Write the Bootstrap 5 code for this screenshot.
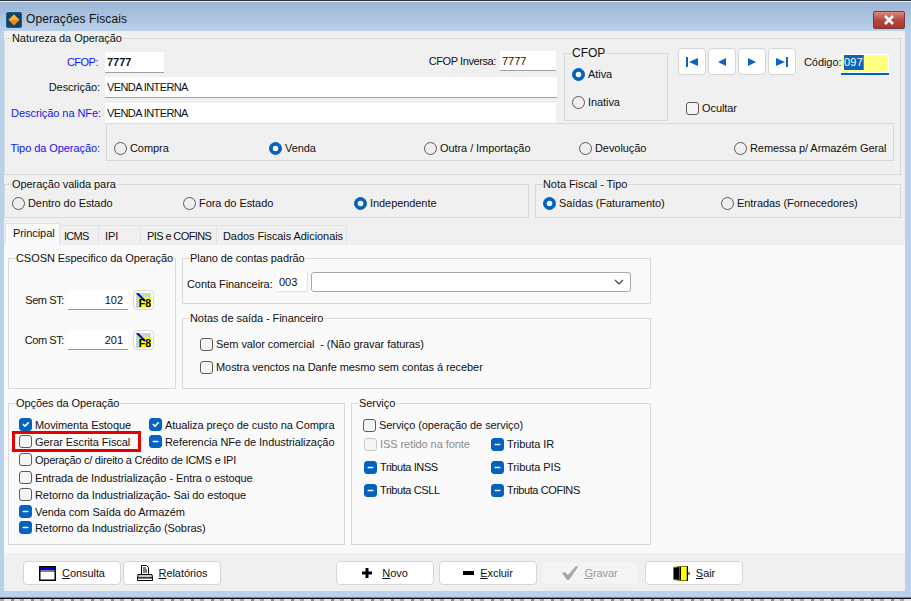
<!DOCTYPE html>
<html lang="pt-BR"><head><meta charset="utf-8"><title>Operações Fiscais</title>
<link rel="stylesheet" href="https://cdn.jsdelivr.net/npm/bootstrap@5.3.0/dist/css/bootstrap.min.css">
<style>
html,body{height:601px;overflow:hidden}
body{background:#b9d1ec;font:11px/14px "Liberation Sans",sans-serif;letter-spacing:-.07px;color:#111;margin:0}
.topline{height:2px;background:linear-gradient(#333 0 1px,#eee 1px)}
.tbar{height:29px;background:linear-gradient(#9bb5d3,#b9d1ec);padding:10px 0 0 6px}
.ticon{width:16px;height:16px;margin-right:4px}
.ttext{font-size:12px;letter-spacing:.1px}
.xbtn{width:32px;height:18px;margin:0 6px 0 auto;position:relative;top:-1px;background:linear-gradient(#d98a80,#b8493f 50%,#a8362c);border:1px solid #7a3a36;border-radius:2px}
.wbody{margin:0 6px 0 4px;height:560px;background:#f0f0f0}
.grp{border:1px solid #d9d9d9;position:relative}
.grp>.cap{position:absolute;top:-8px;left:7px;background:#f0f0f0;padding-right:1px;white-space:nowrap}
.pane .grp>.cap{background:#fafafa}
.nat{height:137px;margin:7px 4px 0 0;padding:13px 0 0 0}
.lblb{color:#1414f0}
.lbl{white-space:nowrap;text-align:right}
.fld{background:#fff;border:0;border-bottom:1px solid #a0a0a0;height:21px;padding:0 2px;font:inherit;color:#111;display:block;border-radius:0;outline:0}
.topsec{height:71px}
.l1{width:94px;padding:3px 1px 0 0;letter-spacing:-.5px}
.l2{width:95px;padding:3px 0 0}
.l3{width:96px;padding:3px 0 0}
.linv{padding-top:2px;letter-spacing:-.4px}
.lef{width:552px;position:relative;z-index:1}
.cfopin{width:59px;height:21px;font-weight:700;margin-left:6px}
.cfinv{width:56px;height:20px;margin:-1px 1px 0 4px}
.dsc{width:452px;margin-left:5px;height:21px;letter-spacing:-.6px}
.dsc2{border-bottom-color:#ddd;height:21px;width:451px;margin-left:4px;letter-spacing:-.6px}
.r2{margin-top:4px}.r3{margin-top:5px}
.cfopbox{width:104px;height:68px;margin:1px 0 0 7px;padding:13px 0 0 7px}
.cfopbox .cap{font-size:12px;letter-spacing:0}
.rd.rdgap{margin-top:14px}
.navcol{margin-left:10px;margin-top:-4px}
.nb{width:28px;height:27px;background:#fff;border:1px solid #d5d5d5;border-radius:4px;padding:0;display:flex;align-items:center;justify-content:center}
.navrow{gap:2px}
.cod{margin:13px 0 0 8px}
.clb{width:37px;margin-top:-6px;text-align:left}
.codin{width:48px;height:21px;margin:-7px 0 0 0;background:#ffff80;border:0;border-bottom:2px solid #0563c0;padding:1px 3px;box-shadow:inset 0 0 0 1px #fff}
.codin span{background:#0a64c0;color:#fff;display:inline-block;line-height:15px;letter-spacing:.2px;border-right:1px solid #e06020}
.ck.ocu{margin:26px 0 0 8px}
.tipo{display:flex}
.tlab{width:100px;padding:18px 5px 0 0;text-align:right;flex:none;margin-right:1px}
.tbox{width:788px;height:38px;border:1px solid #d9d9d9;display:grid;grid-template-columns:155px 155px 155px 155px auto;padding:17px 0 0 7px;align-items:start}
.rd{display:flex;align-items:center;gap:3px;white-space:nowrap;margin:0}
.rd .form-check-input,.ck .form-check-input{margin:0;width:13px;height:13px;flex:none;border-color:#5a5a5a;background-color:transparent}
.rd .form-check-input:checked,.ck .form-check-input:checked,.ck .form-check-input:indeterminate{background-color:#0563c0;border-color:#0563c0;box-shadow:none}
.rd .form-check-input:focus,.ck .form-check-input:focus{box-shadow:none}
.ck{display:flex;align-items:center;gap:3px;white-space:nowrap;margin:0}
.ck .form-check-input{border-radius:3px;background-color:#f5f5f5}
.ck.off{color:#8a8a8a}.ck.off .form-check-input{border-color:#c8c8c8;opacity:1;background-color:#f5f5f5}
.row2{display:flex;gap:6px;margin:9px 4px 0 0;height:34px}
.opv{width:525px;display:grid;grid-template-columns:171px 171px auto;padding:11px 0 0 7px;align-items:start}
.nfk{flex:1;display:grid;grid-template-columns:178px auto;padding:11px 0 0 7px;align-items:start}
.tabsx{display:flex;height:20px;margin-top:7px;padding-left:1px;align-items:flex-end}
.tabx{height:20px;border:1px solid #e2e2e2;border-bottom:0;border-left:0;padding:3px 0 0 6px;background:#f0f0f0;white-space:nowrap}
.tabx.on{background:#fafafa;height:22px;padding:2px 0 0 7px;border-left:1px solid #e2e2e2;z-index:1}
.t1{width:55px}.t2{width:39px;padding-left:4px;letter-spacing:-.7px}.t3{width:42px}.t4{width:76px;letter-spacing:-.6px}.t5{width:130px}
.pane{background:#fafafa;height:308px;padding:13px 0 0 4px}
.pr1{display:flex;gap:6px}
.csn{width:168px;height:131px;padding:31px 0 0 0}
.csrow{display:flex;align-items:center;height:20px;margin-bottom:20px}
.cslb{width:55px;text-align:right;margin-right:4px;letter-spacing:-.4px}
.csin{width:60px;height:20px;text-align:right;padding-right:5px;border-bottom-color:#9a9a9a}
.f8{width:21px;height:20px;margin-left:5px;background:#fff;border:1px solid #d8d8d8;border-radius:4px;padding:2px;display:block}
.f8i{display:block;width:15px;height:15px;background:#c2dcc0;position:relative;overflow:hidden}
.f8y{position:absolute;left:4px;top:4px;right:0;bottom:0;background:#ff0}
.f8t{position:absolute;right:0;bottom:-1px;font:700 10.5px/12px "Liberation Sans",sans-serif;letter-spacing:0;color:#000}
.rc{width:469px}
.pla{height:46px;padding:13px 0 0 4px;display:flex}
.ctalb{width:90px;padding-top:5px;white-space:nowrap}
.ctain{width:31px;height:20px;margin-right:3px;border:1px solid #e2e2e2;border-width:0 1px 1px 0}
.sel{width:320px;height:20px;background:#fff;border:1px solid #a8a8a8;border-radius:3px;position:relative}
.sel svg{position:absolute;right:6px;top:6px}
.nts{height:71px;margin-top:14px;padding:18px 0 0 17px}
.nts .ck+.ck{margin-top:9px}
.pr2{display:flex;gap:6px;margin-top:14px}
.opc{width:337px;height:142px;padding:12px 0 0 10px;position:relative}
.opcol{display:grid;grid-template-columns:130px auto}
.opl .ck{height:17px}
.opl .m1{margin-top:1px}.opl .mn{margin-top:-1px}
.tight{letter-spacing:-.26px}
.hl{position:absolute;left:3px;top:27px;width:129px;height:21px;border:3px solid #e60000}
.srv{width:300px;height:142px;padding:14px 0 0 11px}
.srvg{display:grid;grid-template-columns:127px auto;row-gap:9px;margin:5px 0 0 1px}
.cofins{letter-spacing:-.4px}
.foot{display:flex;padding:8px 0 0 19px}
.bt{width:98px;height:24px;background:#fff;border:1px solid #d5d5d5;border-radius:4px;display:flex;align-items:center;justify-content:center;gap:6px;padding:0;font:inherit;letter-spacing:inherit;color:#111}
.bt u{text-underline-offset:1px}
.bt.dis{background:#f4f4f4;border-color:#ececec;color:#9a9a9a}
.g2{margin-left:2px}.g115{margin-left:115px}.g5{margin-left:5px}.g4{margin-left:4px}.g6{margin-left:6px}
.bgap{height:6px}
.noise{height:4px;background:repeating-linear-gradient(90deg,#aaa 0 4px,#e8e8e8 4px 11px,#8a8a8a 11px 14px,#ddd 14px 20px);border-top:1px solid #111;box-shadow:0 -1px 0 #00b4d0}
.nudge{margin-top:1px}
</style></head><body>
<div class="topline"></div>
<div class="tbar d-flex">
<svg class="ticon" viewBox="0 0 16 16"><rect width="16" height="16" rx="2" fill="#1b5c8e"/><rect x="1" y="1" width="14" height="14" rx="1.500" fill="#143f66"/><path d="M8 2.500L13.500 8 8 13.500 2.500 8z" fill="#f08c14"/><path d="M8 2.500L13.500 8h-11z" fill="#fbb040"/></svg>
<span class="ttext">Operações Fiscais</span>
<span class="xbtn d-flex align-items-center justify-content-center"><svg width="12" height="10" viewBox="0 0 12 10"><path d="M2 1l8 8M10 1L2 9" stroke="#fff" stroke-width="2.6"/></svg></span>
</div>
<div class="wbody overflow-hidden">
 <div class="d-flow-root">
 <div class="grp nat"><span class="cap">Natureza da Operação</span>
  <div class="d-flex topsec">
   <div class="lef">
    <div class="d-flex"><span class="lbl lblb l1">CFOP:</span><input class="fld cfopin" value="7777" readonly><span class="lbl ms-auto linv">CFOP Inversa:</span><input class="fld cfinv" value="7777" readonly></div>
    <div class="d-flex r2"><span class="lbl l2">Descrição:</span><input class="fld dsc" value="VENDA INTERNA" readonly></div>
    <div class="d-flex r3"><span class="lbl lblb l3">Descrição na NFe:</span><input class="fld dsc2" value="VENDA INTERNA" readonly></div>
   </div>
   <div class="grp cfopbox"><span class="cap">CFOP</span>
     <label class="rd"><input class="form-check-input" type="radio" name="a" checked>Ativa</label>
     <label class="rd rdgap"><input class="form-check-input" type="radio" name="a">Inativa</label>
   </div>
   <div class="navcol">
    <div class="d-flex">
     <div class="d-flex navrow">
      <button class="nb" aria-label="Primeiro"><svg width="12" height="10" viewBox="0 0 12 10"><path d="M0 0h2v10H0zM12 1v8L3 5z" fill="#0a64c0"/></svg></button>
      <button class="nb" aria-label="Anterior"><svg width="10" height="10" viewBox="0 0 10 10"><path d="M9 1v8L1 5z" fill="#0a64c0"/></svg></button>
      <button class="nb" aria-label="Próximo"><svg width="10" height="10" viewBox="0 0 10 10"><path d="M1 1v8l8-4z" fill="#0a64c0"/></svg></button>
      <button class="nb" aria-label="Último"><svg width="12" height="10" viewBox="0 0 12 10"><path d="M10 0h2v10h-2zM0 1v8l9-4z" fill="#0a64c0"/></svg></button>
     </div>
     <div class="cod d-flex"><span class="lbl clb">Código:</span><div class="codin"><span>097</span></div></div>
    </div>
    <label class="ck ocu"><input class="form-check-input" type="checkbox">Ocultar</label>
   </div>
  </div>
  <div class="tipo"><span class="tlab lblb">Tipo da Operação:</span>
   <div class="tbox">
    <label class="rd"><input class="form-check-input" type="radio" name="b">Compra</label>
    <label class="rd"><input class="form-check-input" type="radio" name="b" checked>Venda</label>
    <label class="rd"><input class="form-check-input" type="radio" name="b">Outra / Importação</label>
    <label class="rd"><input class="form-check-input" type="radio" name="b">Devolução</label>
    <label class="rd"><input class="form-check-input" type="radio" name="b">Remessa p/ Armazém Geral</label>
   </div>
  </div>
 </div>
 </div>
 <div class="row2">
  <div class="grp opv"><span class="cap">Operação valida para</span>
   <label class="rd"><input class="form-check-input" type="radio" name="c">Dentro do Estado</label>
   <label class="rd"><input class="form-check-input" type="radio" name="c">Fora do Estado</label>
   <label class="rd"><input class="form-check-input" type="radio" name="c" checked>Independente</label>
  </div>
  <div class="grp nfk"><span class="cap">Nota Fiscal - Tipo</span>
   <label class="rd"><input class="form-check-input" type="radio" name="d" checked>Saídas (Faturamento)</label>
   <label class="rd"><input class="form-check-input" type="radio" name="d">Entradas (Fornecedores)</label>
  </div>
 </div>
 <div class="tabsx">
  <div class="tabx on t1">Principal</div>
  <div class="tabx t2">ICMS</div>
  <div class="tabx t3">IPI</div>
  <div class="tabx t4">PIS e COFINS</div>
  <div class="tabx t5">Dados Fiscais Adicionais</div>
 </div>
 <div class="pane">
  <div class="pr1">
   <div class="grp csn"><span class="cap">CSOSN Especifico da Operação</span>
    <div class="csrow"><span class="cslb">Sem ST:</span><input class="fld csin" value="102" readonly><span class="f8"><span class="f8i"><span class="f8y"></span><svg class="position-absolute top-0 start-0" width="10" height="10"><path d="M1 0l8 8" stroke="#0000d0" stroke-width="2"/></svg><span class="f8t">F8</span></span></span></div>
    <div class="csrow"><span class="cslb">Com ST:</span><input class="fld csin" value="201" readonly><span class="f8"><span class="f8i"><span class="f8y"></span><svg class="position-absolute top-0 start-0" width="10" height="10"><path d="M1 0l8 8" stroke="#0000d0" stroke-width="2"/></svg><span class="f8t">F8</span></span></span></div>
   </div>
   <div class="rc">
    <div class="grp pla"><span class="cap">Plano de contas padrão</span>
     <span class="ctalb">Conta Financeira:</span><input class="fld ctain" value="003" readonly>
     <div class="sel"><svg width="10" height="6" viewBox="0 0 10 6"><path d="M1 1l4 4 4-4" fill="none" stroke="#444" stroke-width="1.2"/></svg></div>
    </div>
    <div class="grp nts"><span class="cap">Notas de saída - Financeiro</span>
     <label class="ck"><input class="form-check-input" type="checkbox">Sem valor comercial &nbsp;- (Não gravar faturas)</label>
     <label class="ck"><input class="form-check-input" type="checkbox">Mostra venctos na Danfe mesmo sem contas á receber</label>
    </div>
   </div>
  </div>
  <div class="pr2">
   <div class="grp opc opl"><span class="cap">Opções da Operação</span>
    <div class="opcol">
     <label class="ck"><input class="form-check-input" type="checkbox" checked>Movimenta Estoque</label>
     <label class="ck"><input class="form-check-input" type="checkbox" checked>Atualiza preço de custo na Compra</label>
     <label class="ck"><input class="form-check-input" type="checkbox">Gerar Escrita Fiscal</label>
     <label class="ck"><input class="form-check-input ind" type="checkbox">Referencia NFe de Industrialização</label>
    </div>
    <label class="ck m1 tight"><input class="form-check-input" type="checkbox">Operação c/ direito a Crédito de ICMS e IPI</label>
    <label class="ck m1"><input class="form-check-input" type="checkbox">Entrada de Industrialização - Entra o estoque</label>
    <label class="ck"><input class="form-check-input" type="checkbox">Retorno da Industrialização- Sai do estoque</label>
    <label class="ck"><input class="form-check-input ind" type="checkbox">Venda com Saída do Armazém</label>
    <label class="ck mn"><input class="form-check-input ind" type="checkbox">Retorno da Industrializção (Sobras)</label>
    <div class="hl"></div>
   </div>
   <div class="grp srv"><span class="cap">Serviço</span>
    <label class="ck"><input class="form-check-input" type="checkbox">Serviço (operação de serviço)</label>
    <div class="srvg">
     <label class="ck off"><input class="form-check-input" type="checkbox">ISS retido na fonte</label>
     <label class="ck"><input class="form-check-input ind" type="checkbox">Tributa IR</label>
     <label class="ck cofins"><input class="form-check-input ind" type="checkbox">Tributa INSS</label>
     <label class="ck"><input class="form-check-input ind" type="checkbox">Tributa PIS</label>
     <label class="ck cofins"><input class="form-check-input ind" type="checkbox">Tributa CSLL</label>
     <label class="ck cofins"><input class="form-check-input ind" type="checkbox">Tributa COFINS</label>
    </div>
   </div>
  </div>
 </div>
 <div class="foot">
  <button class="bt"><svg width="17" height="15" viewBox="0 0 17 15"><rect x=".75" y=".75" width="15.5" height="13.5" fill="#fff" stroke="#000" stroke-width="1.5"/><rect x="1" y="1" width="15" height="3" fill="#0000c8"/><path d="M1 5h15" stroke="#000"/></svg><span><u>C</u>onsulta</span></button>
  <button class="bt g2"><svg width="16" height="16" viewBox="0 0 16 16"><path d="M4.500 .5h5l2 2v7h-7z" fill="#fff" stroke="#000"/><path d="M6 3h3M6 5h4M6 7h4" stroke="#000"/><path d="M1 9.500h14l.5 3.500H.5z" fill="#c8c8c8" stroke="#000"/><path d="M.5 13h15v2.500H.5z" fill="#fff" stroke="#000"/></svg><span><u>R</u>elatórios</span></button>
  <button class="bt g115"><svg width="10" height="10" viewBox="0 0 10 10"><path d="M3.500 0h3v3.500H10v3H6.500V10h-3V6.500H0v-3h3.500z"/></svg><span class="ms-1"><u>N</u>ovo</span></button>
  <button class="bt g5"><svg width="11" height="4" viewBox="0 0 11 4"><path d="M0 0h11v4H0z"/></svg><span><u>E</u>xcluir</span></button>
  <button class="bt dis g4" disabled><svg width="16" height="14" viewBox="0 0 16 14"><path d="M0 7l3-1 3 3 8-9 2 1-9 13H5z" fill="#a8a8a8"/></svg><span><u>G</u>ravar</span></button>
  <button class="bt g6"><svg width="17" height="15" viewBox="0 0 17 15"><path d="M.5 1.500L7 .5v14l-6.500-1z" fill="#000" stroke="#808000"/><path d="M7 .5h7v14H7z" fill="#ff0" stroke="#808000"/><path d="M14.500 0v15M16 6v3" stroke="#000"/><path d="M7.500 1v13" stroke="#000"/></svg><span><u>S</u>air</span></button>
 </div>
</div>
<div class="bgap"></div>
<div class="noise nudge"></div>
<script>document.querySelectorAll('.ind').forEach(function(e){e.indeterminate=true});</script>
</body></html>
